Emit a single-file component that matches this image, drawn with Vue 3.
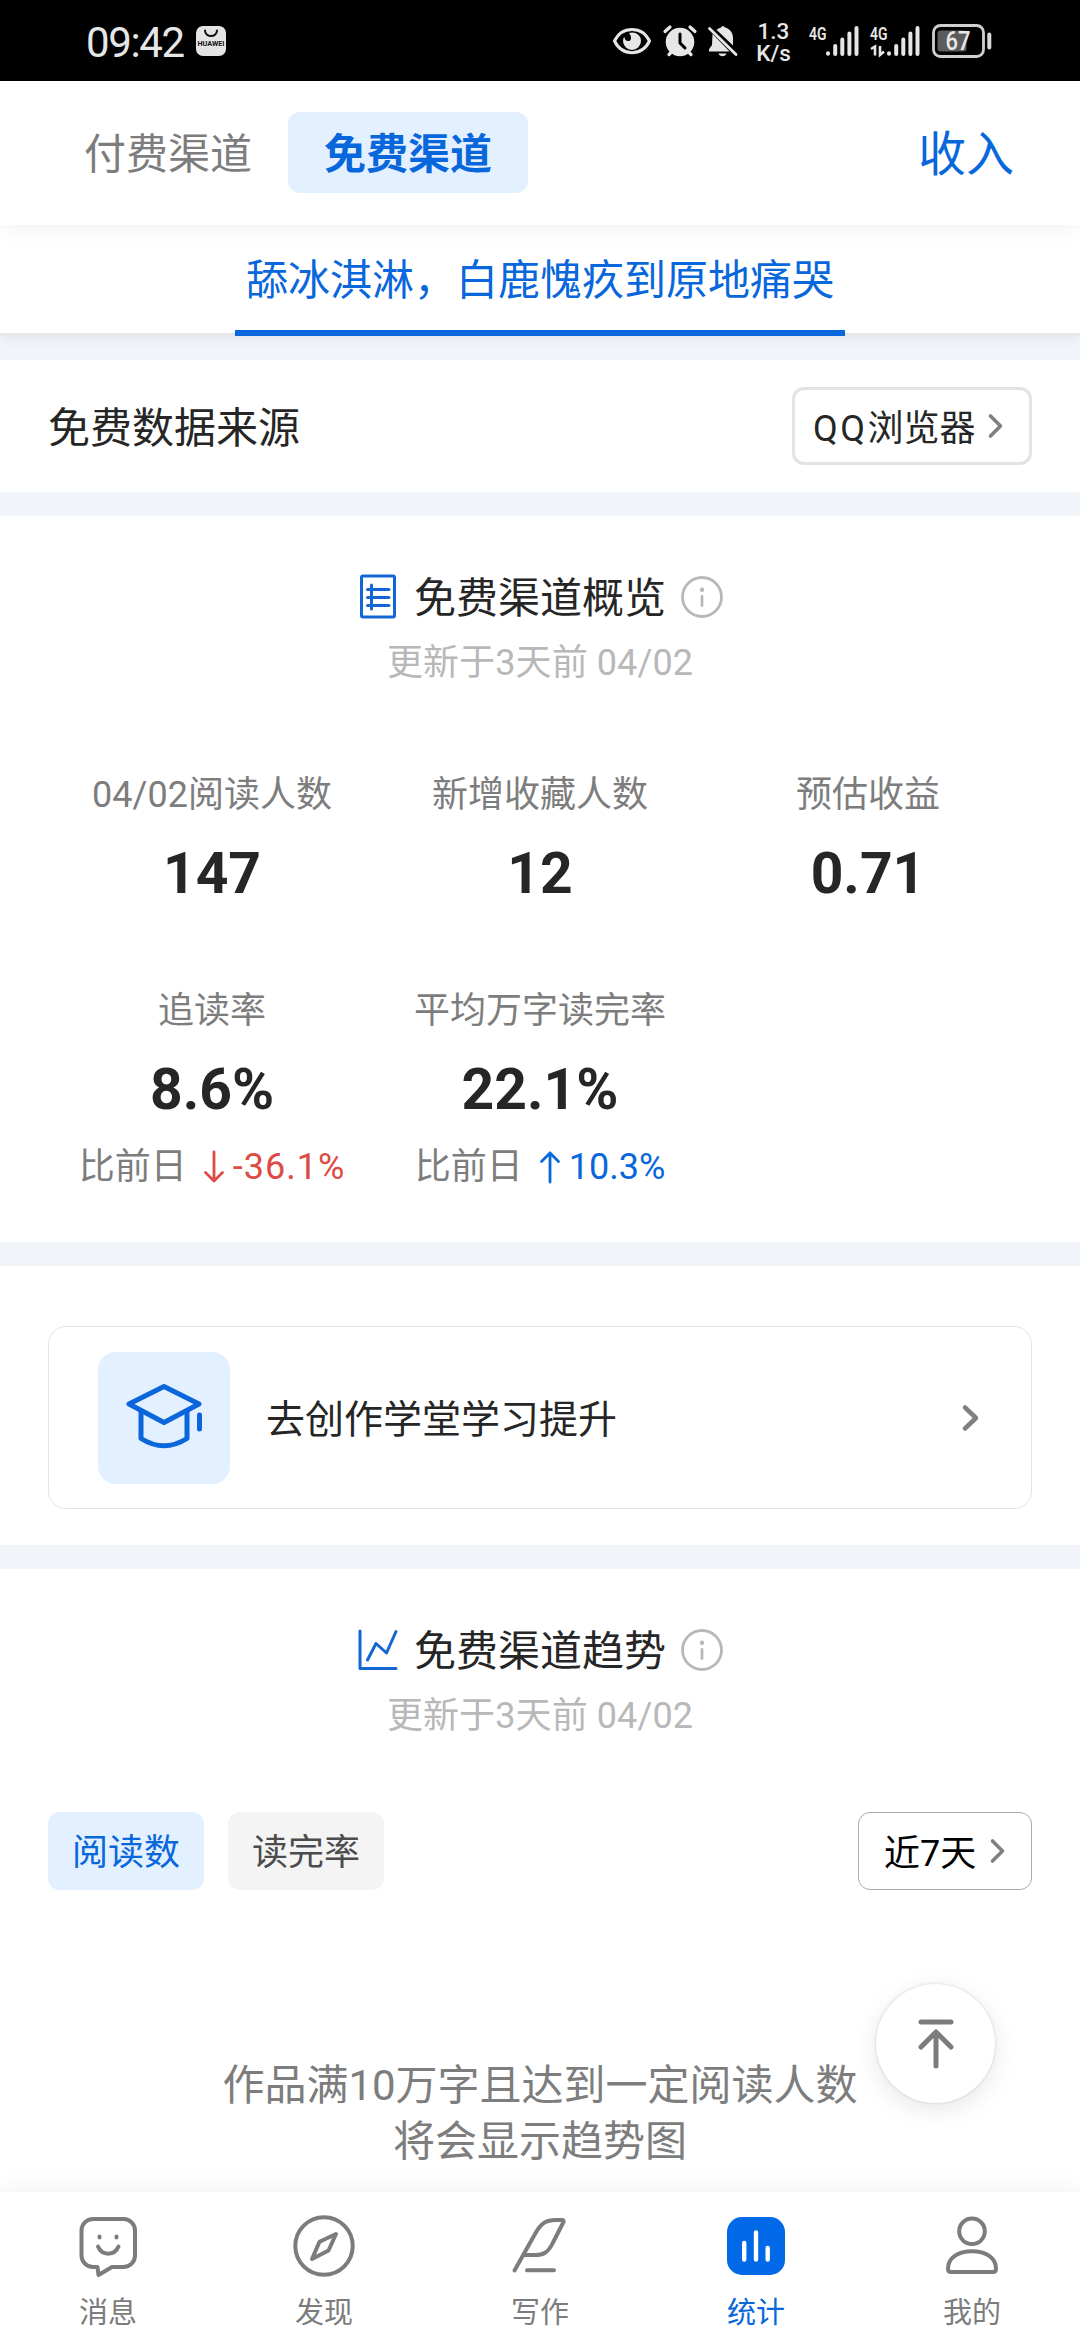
<script setup>
const stats = [
  { label: '04/02阅读人数', value: '147' },
  { label: '新增收藏人数', value: '12' },
  { label: '预估收益', value: '0.71' },
  { label: '追读率', value: '8.6%', diff: '-36.1%', dir: 'down' },
  { label: '平均万字读完率', value: '22.1%', diff: '10.3%', dir: 'up' },
]
const navs = [
  { key: 'msg', label: '消息' },
  { key: 'find', label: '发现' },
  { key: 'write', label: '写作' },
  { key: 'stat', label: '统计', active: true },
  { key: 'me', label: '我的' },
]
</script>

<template>
  <div class="page">
    <div class="status">
      <span class="time">09:42</span>
      <svg class="store" width="30" height="30" viewBox="0 0 30 30">
        <rect width="30" height="30" rx="7" fill="#e4e4e4" />
        <path d="M9 4.500a6 5.500 0 0 0 12 0" fill="none" stroke="#111" stroke-width="2" stroke-linecap="round" />
        <text x="15" y="20" text-anchor="middle" font-size="6.600" font-weight="700" textLength="27" lengthAdjust="spacingAndGlyphs" fill="#111">HUAWEI</text>
      </svg>
      <div class="status-right">
        <svg width="38" height="28" viewBox="0 0 38 28">
          <path d="M1.500 14C9-1.500 29-1.500 36.500 14 29 29.500 9 29.500 1.500 14z" fill="none" stroke="#e6e6e6" stroke-width="3" />
          <path d="M16 6.200c5-2 12 1.300 12 7.800a9 9 0 0 1-18 0c0-1.500.4-3 1.200-4.200.6 3 2.200 4.700 4.800 4.200 2.500-.7 3-4.500 0-7.800z" fill="#e6e6e6" />
        </svg>
        <svg class="alarm" width="34" height="32" viewBox="0 0 34 32">
          <circle cx="17" cy="17" r="14.300" fill="#e6e6e6" />
          <path d="M2 6.500L7 2M32 6.500L27 2M6 29.500l3-3M28 29.500l-3-3" stroke="#e6e6e6" stroke-width="3.200" stroke-linecap="round" />
          <path d="M17 9v9l5 5" fill="none" stroke="#000" stroke-width="3" stroke-linecap="round" stroke-linejoin="round" />
        </svg>
        <svg class="bell" width="30" height="32" viewBox="0 0 30 32">
          <path d="M8.500 4.800C10 3.500 12 3 13 2.500c.7-1.700 3.300-1.700 4 0 5 1.300 8 5.300 8 10.500v7.500zM4.500 9L21.500 26.500H1v-2.300l3-4.200zM10.500 28.500h8c-1 3.600-7 3.600-8 0z" fill="#e6e6e6" />
          <path d="M1.500 3.500l26.500 26" stroke="#e6e6e6" stroke-width="2.800" stroke-linecap="round" />
        </svg>
        <div class="speed"><span>1.3</span><span>K/s</span></div>
        <svg class="sig1" width="51" height="32" viewBox="0 0 51 32">
          <text x="0" y="14.500" font-size="18" font-weight="600" textLength="17.500" lengthAdjust="spacingAndGlyphs" fill="#e6e6e6">4G</text>
          <path d="M19 28.300v.4M26.200 21v8M33.300 14.500v14.500M40.400 8.500v20.500M47.500 3v26" stroke="#e6e6e6" stroke-width="4" stroke-linecap="round" />
        </svg>
        <svg class="sig2" width="51" height="32" viewBox="0 0 51 32">
          <text x="0" y="14.500" font-size="18" font-weight="600" textLength="17.500" lengthAdjust="spacingAndGlyphs" fill="#e6e6e6">4G</text>
          <path d="M1 24l4-2.500v9M10 21v9l4-3.500" fill="none" stroke="#e6e6e6" stroke-width="2.600" />
          <path d="M19 28.300v.4M26.200 21v8M33.300 14.500v14.500M40.400 8.500v20.500M47.500 3v26" stroke="#e6e6e6" stroke-width="4" stroke-linecap="round" />
        </svg>
        <svg class="battery" width="61" height="34" viewBox="0 0 61 34">
          <rect x="1.500" y="1.500" width="50" height="31" rx="7" fill="none" stroke="#cfcfcf" stroke-width="2.800" />
          <rect x="5.500" y="6.500" width="29" height="21" rx="3" fill="#5c5c5c" />
          <rect x="55.300" y="8.500" width="4" height="17" rx="2" fill="#d8d8d8" />
          <text x="26" y="26" text-anchor="middle" font-size="25" font-weight="500" textLength="25" lengthAdjust="spacingAndGlyphs" fill="#e8e8e8">67</text>
        </svg>
      </div>
    </div>

    <header class="header">
      <span class="channel">付费渠道</span>
      <span class="channel on">免费渠道</span>
      <span class="income">收入</span>
    </header>

    <div class="book-bar"><span class="book">舔冰淇淋，白鹿愧疚到原地痛哭</span></div>

    <main class="content">
      <section class="source">
        <span class="source-label">免费数据来源</span>
        <button class="picker source-picker">
          <span class="picker-text"><span class="latin">QQ</span>浏览器</span>
          <svg width="16" height="26" viewBox="0 0 16 26"><path d="M2.500 3l10 10-10 10" class="chev" /></svg>
        </button>
      </section>

      <section class="overview">
        <div class="title">
          <svg width="42" height="48" viewBox="0 0 42 48">
            <g fill="none" stroke="#1467d2" stroke-width="3" stroke-linecap="round" stroke-linejoin="round">
              <rect x="4.500" y="3" width="33" height="41" rx="1.500" />
              <path d="M14.500 12v24M10.500 16.500H32M10.500 24.500H32M10.500 32.500H32" />
            </g>
          </svg>
          <h2>免费渠道概览</h2>
          <svg width="42" height="42" viewBox="0 0 42 42">
            <circle cx="21" cy="21" r="19.500" class="info" />
            <circle cx="21" cy="13.700" r="2.200" fill="#b8b8b8" />
            <path d="M21 20.500v9" class="info" />
          </svg>
        </div>
        <p class="updated">更新于3天前 04/02</p>
        <div class="grid">
          <div v-for="s in stats" :key="s.label" class="stat">
            <span class="stat-label">{{ s.label }}</span>
            <strong class="stat-value">{{ s.value }}</strong>
            <span v-if="s.diff" class="compare">比前日
              <span class="diff" :class="s.dir">
                <svg width="20" height="32" viewBox="0 0 20 32">
                  <path v-if="s.dir === 'down'" d="M10 1v29M1.500 21.500L10 30l8.500-8.500" />
                  <path v-else d="M10 31V2M1.500 10.500L10 2l8.500 8.500" />
                </svg>{{ s.diff }}</span>
            </span>
          </div>
        </div>
      </section>

      <section class="school">
        <div class="school-card">
          <div class="school-icon">
            <svg width="80" height="88" viewBox="0 0 80 88">
              <g fill="none" stroke="#0b66dc" stroke-width="5" stroke-linejoin="round" stroke-linecap="round">
                <path d="M40 12.500L75 30 40 48.500 5 30z" />
                <path d="M17 37v27.500q23 14.500 46 0V37M75.500 41v14" />
              </g>
            </svg>
          </div>
          <span class="school-text">去创作学堂学习提升</span>
          <svg width="20" height="30" viewBox="0 0 20 30"><path d="M4 4.500L15 15 4 25.500" class="chev bold" /></svg>
        </div>
      </section>

      <section class="trend">
        <div class="title">
          <svg width="42" height="48" viewBox="0 0 42 48">
            <path d="M3 5v37.500h36M10.500 34l8.500-16.500L29.500 27 39 5.500" fill="none" stroke="#1467d2" stroke-width="3" stroke-linecap="round" stroke-linejoin="round" />
          </svg>
          <h2>免费渠道趋势</h2>
          <svg width="42" height="42" viewBox="0 0 42 42">
            <circle cx="21" cy="21" r="19.500" class="info" />
            <circle cx="21" cy="13.700" r="2.200" fill="#b8b8b8" />
            <path d="M21 20.500v9" class="info" />
          </svg>
        </div>
        <p class="updated">更新于3天前 04/02</p>
        <div class="filters">
          <span class="chip on">阅读数</span>
          <span class="chip">读完率</span>
          <button class="picker range">
            <span class="picker-text">近7天</span>
            <svg width="16" height="26" viewBox="0 0 16 26"><path d="M2.500 3l10 10-10 10" class="chev" /></svg>
          </button>
        </div>
        <p class="empty">作品满10万字且达到一定阅读人数<br />将会显示趋势图</p>
      </section>

      <button class="to-top">
        <svg width="48" height="60" viewBox="0 0 48 60">
          <path d="M9 8h30M24 52V19M9 33l15-15 15 15" fill="none" stroke="#7c7c7c" stroke-width="5" stroke-linecap="round" stroke-linejoin="round" />
        </svg>
      </button>
    </main>

    <nav class="nav">
      <div v-for="n in navs" :key="n.key" class="nav-item" :class="{ active: n.active }">
        <svg width="72" height="72" viewBox="0 0 72 72">
          <g v-if="n.key === 'msg'" class="line">
            <path d="M21 9h30.500a11.500 11.500 0 0 1 11.500 11.500v25A11.500 11.500 0 0 1 51.500 57H40L26.500 65l-1-8H21A11.500 11.500 0 0 1 9.500 45.500v-25A11.500 11.500 0 0 1 21 9z" />
            <path d="M27.500 26.500v1M44.500 26.500v1M26 36.500c4 9.500 16.500 9.500 20.500 0" />
          </g>
          <g v-else-if="n.key === 'find'" class="line">
            <circle cx="36" cy="36" r="28.700" />
            <path d="M48 24l-16.500 7.700L24 49l16.500-8.500z" />
          </g>
          <g v-else-if="n.key === 'write'" class="line">
            <path d="M10.500 60.500L31 24C37 13 42 10 52 10h6.500q1.500.500 1 2L49 32.500C44 43 39 45 31 45H20M23 60.300h27" />
          </g>
          <g v-else-if="n.key === 'stat'">
            <rect x="7" y="7" width="58" height="58" rx="15" fill="#0168e8" />
            <path d="M24.200 33v16.500M36 22.500v27M47.700 38v11.500" stroke="#fff" stroke-width="4.400" stroke-linecap="round" />
          </g>
          <g v-else class="line">
            <circle cx="36" cy="21.300" r="12.800" />
            <path d="M15 62h42q3 0 3-3.500C60 48 50 41.300 36 41.300S12 48 12 58.500q0 3.500 3 3.500z" />
          </g>
        </svg>
        <span>{{ n.label }}</span>
      </div>
    </nav>
  </div>
</template>

<style>
body { background: #fff; }
</style>

<style scoped>
.page {
  width: 1080px;
  height: 2340px;
  display: flex;
  flex-direction: column;
  overflow: hidden;
  background: #f1f5fa;
  color: #262626;
  font-family: Roboto, "Noto Sans CJK SC", sans-serif;
  font-size: 36px;
}
svg { display: block; flex: none; overflow: visible; }
h2, p { margin: 0; font-weight: 400; }
button { font: inherit; color: inherit; background: #fff; padding: 0; }

.status {
  flex: none;
  height: 81px;
  box-sizing: border-box;
  padding: 0 87px 0 86px;
  display: flex;
  align-items: center;
  background: #000;
  color: #e6e6e6;
}
.time { font-size: 42px; line-height: 48px; letter-spacing: -1.4px; padding-top: 5px; width: 110px; }
.store { margin-top: 1px; }
.status-right { margin-left: auto; display: flex; align-items: center; }
.alarm { margin-left: 12px; }
.bell { margin-left: 11px; }
.speed { width: 35px; margin-left: 18px; display: flex; flex-direction: column; align-items: center; font-size: 22.5px; line-height: 22px; font-weight: 500; padding-top: 2px; }
.sig1 { margin-left: 18px; }
.sig2 { margin-left: 10px; }
.battery { margin-left: 11px; }

.header {
  position: relative;
  z-index: 2;
  flex: none;
  height: 144px;
  box-sizing: border-box;
  padding: 31px 66px 0 48px;
  display: flex;
  align-items: flex-start;
  background: #fff;
  box-shadow: 0 0 24px rgba(0, 0, 0, .075);
}
.channel { width: 240px; height: 81px; line-height: 85px; text-align: center; font-size: 42px; color: #7d7d7d; border-radius: 12px; }
.channel.on { background: #e3f0ff; color: #0967dc; font-weight: 700; }
.income { margin-left: auto; font-size: 48px; line-height: 85px; color: #0967dc; }

.book-bar {
  position: relative;
  z-index: 1;
  flex: none;
  height: 108px;
  display: flex;
  justify-content: center;
  background: #fff;
  border-bottom: 3px solid #e5e7ea;
  box-shadow: 0 2px 12px rgba(0, 0, 0, .07);
}
.book { height: 105px; line-height: 112px; padding: 0 11px; font-size: 42px; color: #0967dc; border-bottom: 6px solid #0967dc; }

.content { position: relative; flex: 1; min-height: 0; padding-top: 24px; display: flex; flex-direction: column; gap: 24px; overflow: hidden; }
section { flex: none; box-sizing: border-box; background: #fff; padding: 0 48px; }

.source { height: 132px; display: flex; align-items: center; justify-content: space-between; }
.source-label { font-size: 42px; padding-bottom: 3px; }
.picker { height: 78px; box-sizing: border-box; display: flex; align-items: center; border-radius: 12px; }
.picker-text { padding-bottom: 3px; white-space: nowrap; }
.latin { letter-spacing: 2.5px; }
.source-picker { width: 240px; border: 3px solid #e2e3e4; padding-left: 18px; }
.source-picker svg { margin-left: 12px; }
.chev { fill: none; stroke: #808080; stroke-width: 3.6; stroke-linecap: round; stroke-linejoin: round; }
.chev.bold { stroke-width: 4.500; }

.overview { height: 726px; padding-top: 51px; }
.title { height: 60px; display: flex; align-items: center; justify-content: center; gap: 15px; }
.title h2 { font-size: 42px; line-height: 60px; padding-top: 3px; }
.info { fill: none; stroke: #b8b8b8; stroke-width: 2.800; stroke-linecap: round; }
.updated { margin-top: 9px; height: 54px; line-height: 55px; text-align: center; color: #b8b8b8; letter-spacing: .1px; }
.grid { margin-top: 78px; display: grid; grid-template-columns: repeat(3, 328px); grid-auto-rows: 216px; }
.stat { display: flex; flex-direction: column; align-items: center; white-space: nowrap; }
.stat-label { line-height: 54px; color: #7d7d7d; }
.stat-value { margin-top: 17px; font-size: 57px; line-height: 70px; font-weight: 700; }
.compare { margin-top: 15px; line-height: 54px; color: #7d7d7d; display: flex; align-items: center; }
.diff { margin-left: 17px; display: flex; align-items: center; gap: 9px; }
.diff.down { letter-spacing: 1px; }
.diff svg { fill: none; stroke: currentColor; stroke-width: 2.800; stroke-linecap: round; stroke-linejoin: round; }
.down { color: #dd4b45; }
.up { color: #0967dc; }

.school { height: 279px; padding-top: 60px; }
.school-card { height: 183px; box-sizing: border-box; padding: 0 50px 0 49px; display: flex; align-items: center; border: 1px solid #e2e3e4; border-radius: 18px; }
.school-icon { width: 132px; height: 132px; border-radius: 18px; background: #e3f0ff; display: flex; align-items: center; justify-content: center; }
.school-text { flex: 1; margin-left: 36px; font-size: 39px; padding-bottom: 3px; }

.trend { height: 640px; padding-top: 51px; }
.filters { margin-top: 69px; display: flex; align-items: center; gap: 24px; }
.chip { width: 156px; height: 78px; line-height: 83px; text-align: center; border-radius: 12px; background: #f4f4f4; color: #4c4c4c; }
.chip.on { background: #e3f0ff; color: #0967dc; }
.range { width: 174px; margin-left: auto; border: 1px solid #aaa; padding-left: 25px; color: #000; }
.range svg { margin-left: 14px; }
.empty { margin-top: 168px; font-size: 42px; line-height: 56px; text-align: center; color: #7d7d7d; }

.to-top {
  position: absolute;
  right: 85px;
  bottom: 89px;
  width: 119px;
  height: 119px;
  border: 0;
  border-radius: 50%;
  display: flex;
  align-items: center;
  justify-content: center;
  box-shadow: 0 0 3px rgba(0, 0, 0, .16), 0 6px 24px rgba(0, 0, 0, .1);
}

.nav { position: relative; z-index: 2; flex: none; height: 148px; display: flex; background: #fff; box-shadow: 0 0 24px rgba(0, 0, 0, .075); }
.nav-item { width: 216px; padding-top: 18px; display: flex; flex-direction: column; align-items: center; font-size: 29px; line-height: 40px; color: #7c7c7c; }
.nav-item span { margin-top: 11px; }
.nav-item.active { color: #0967dc; }
.line { fill: none; stroke: #7c7c7c; stroke-width: 4; stroke-linecap: round; stroke-linejoin: round; }
</style>
